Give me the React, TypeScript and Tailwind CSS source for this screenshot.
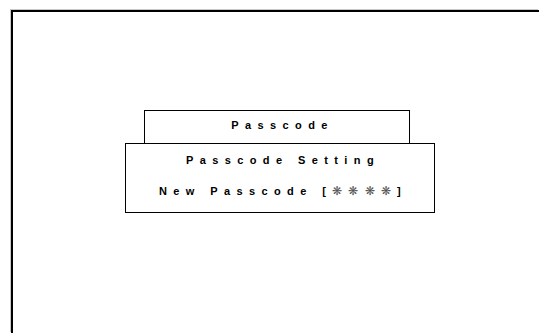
export default function App() {
  const font = { fontFamily: '"Liberation Sans", Arial, sans-serif' };
  return (
    <div className="w-[539px] h-[333px] bg-white pt-[10px] pl-[11px] overflow-hidden" style={font}>
      <div className="h-full border-t-2 border-l-2 border-black shadow-[-1px_-1px_0_#c8c8c8]">
        <div className="mt-[98px] ml-[131px] w-[266px] h-[33px] border border-b-0 border-black pt-[8px] pl-[11px] text-center text-[11px] leading-[13px] font-bold tracking-[6.4px] text-black">
          Passcode
        </div>
        <div className="ml-[112px] w-[310px] h-[70px] border border-black pt-[10px] pl-[6px] flex flex-col gap-[18px] text-center text-[11px] leading-[13px] font-bold tracking-[6.4px] text-black">
          <div>Passcode Setting</div>
          <div>
            New Passcode [
            <span className="font-normal text-[12px] tracking-[6.2px] text-[#555]">❋❋❋❋</span>]
          </div>
        </div>
      </div>
    </div>
  );
}
